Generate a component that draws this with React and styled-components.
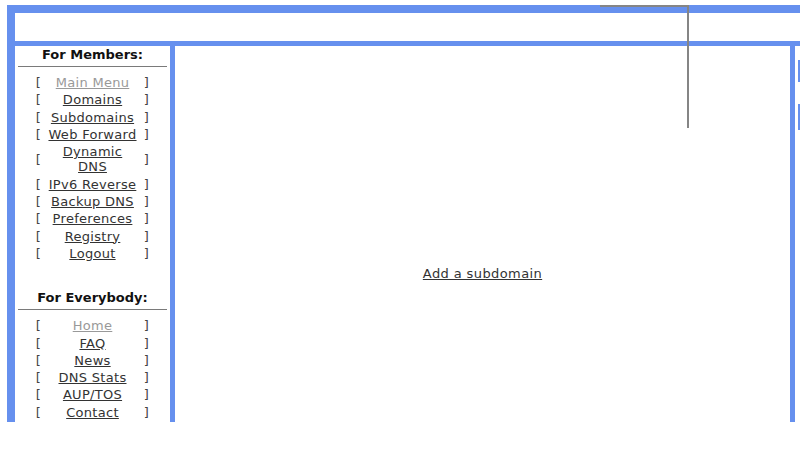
import React from "react";
import styled, { createGlobalStyle } from "styled-components";

const blue = "#6690ee";

const GlobalStyle = createGlobalStyle`
  body {
    margin: 0;
    background: #fff;
    font-family: "DejaVu Sans", Verdana, sans-serif;
    font-size: 13px;
    color: #222;
  }
`;

const Viewport = styled.div`
  position: relative;
  width: 800px;
  height: 422px;
  overflow: hidden;
`;

const Frame = styled.div`
  margin: 5px 0 0 7px;
  padding: 8px 0 0 8px;
  background: ${blue};
  width: max-content;
  display: grid;
  grid-template-columns: 155px 615px 200px;
  grid-template-rows: 28px 454px;
  gap: 5px;
`;

const Header = styled.div`
  grid-column: 1 / -1;
  background: #fff;
`;

const Sidebar = styled.div`
  background: #fff;
  padding-top: 1px;
`;

const Title = styled.div`
  font-weight: bold;
  text-align: center;
  line-height: 15px;
  margin-top: ${(p) => p.$top || 0}px;
  color: #111;
`;

const Rule = styled.div`
  margin: 4px 3px 7px;
  border-top: 1px solid #7a7a7a;
`;

const Menu = styled.div`
  display: grid;
  grid-template-columns: 12px 96px 12px;
  justify-content: center;
  line-height: 15.3px;
  letter-spacing: 0.3px;
`;

const Bracket = styled.span`
  align-self: center;
  text-align: center;
  color: #444;
  padding: 1px 0;
`;

const Link = styled.a`
  text-align: center;
  padding: 1px 0;
  white-space: nowrap;
  color: ${(p) => (p.$current ? "#999" : "#333")};
  text-decoration: underline;
`;

const Main = styled.div`
  background: #fff;
  display: flex;
  align-items: center;
  justify-content: center;
`;

const MainLink = styled.a`
  color: #333;
  letter-spacing: 0.4px;
  text-decoration: underline;
`;

const Aside = styled.div`
  background: #fff;
  padding: 14px 0 0 3px;
  display: flex;
  flex-direction: column;
  gap: 22px;
`;

const AsideBox = styled.div`
  width: 120px;
  height: ${(p) => p.$h}px;
  border: 2px solid ${blue};
`;

const Pointer = styled.div`
  position: absolute;
  left: 600px;
  top: 5px;
  width: 87px;
  height: 121px;
  border-top: 2px solid #858585;
  border-right: 2px solid #858585;
`;

const members = [
  ["Main Menu", true],
  ["Domains"],
  ["Subdomains"],
  ["Web Forward"],
  ["Dynamic\nDNS"],
  ["IPv6 Reverse"],
  ["Backup DNS"],
  ["Preferences"],
  ["Registry"],
  ["Logout"],
];

const everybody = [
  ["Home", true],
  ["FAQ"],
  ["News"],
  ["DNS Stats"],
  ["AUP/TOS"],
  ["Contact"],
];

function MenuList({ items }) {
  return (
    <Menu>
      {items.map(([label, current]) => (
        <React.Fragment key={label}>
          <Bracket>[</Bracket>
          <Link href="#" $current={current}>
            {label.split("\n").map((part, i) => (
              <React.Fragment key={i}>
                {i > 0 && <br />}
                {part}
              </React.Fragment>
            ))}
          </Link>
          <Bracket>]</Bracket>
        </React.Fragment>
      ))}
    </Menu>
  );
}

export default function App() {
  return (
    <Viewport>
      <GlobalStyle />
      <Frame>
        <Header />
        <Sidebar>
          <Title>For Members:</Title>
          <Rule />
          <MenuList items={members} />
          <Title $top={28}>For Everybody:</Title>
          <Rule />
          <MenuList items={everybody} />
        </Sidebar>
        <Main>
          <MainLink href="#">Add a subdomain</MainLink>
        </Main>
        <Aside>
          <AsideBox $h={18} />
          <AsideBox $h={22} />
        </Aside>
      </Frame>
      <Pointer />
    </Viewport>
  );
}
